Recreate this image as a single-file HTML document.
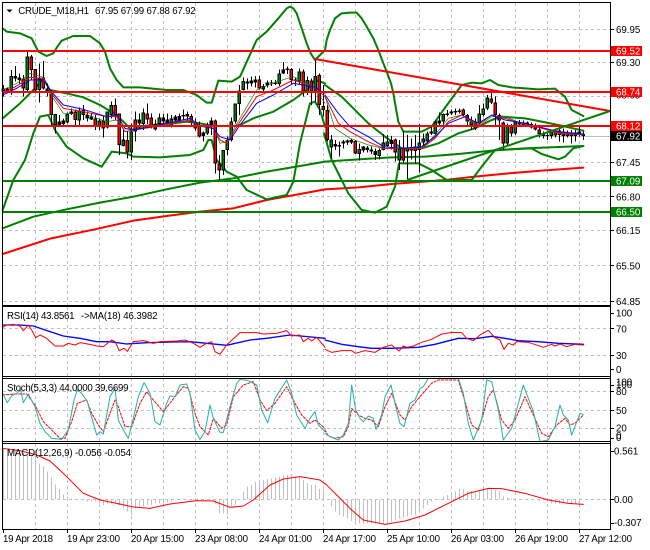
<!DOCTYPE html>
<html><head><meta charset="utf-8"><style>
html,body{margin:0;padding:0;background:#fff}
svg{display:block}
text{font-family:"Liberation Sans",sans-serif;font-size:9.7px;fill:#000}
.w{fill:#fff}
polyline{stroke-linejoin:round;stroke-linecap:round}
</style></head><body>
<svg width="650" height="550" viewBox="0 0 650 550" xmlns="http://www.w3.org/2000/svg">
<rect width="650" height="550" fill="#fff"/>
<!-- grid -->
<g stroke="#c0c0c0" stroke-width="1" stroke-dasharray="3 3" fill="none" shape-rendering="crispEdges">
<path d="M35.5 3V305M67.5 3V305M99.5 3V305M131.5 3V305M163.5 3V305M195.5 3V305M227.5 3V305M259.5 3V305M291.5 3V305M323.5 3V305M355.5 3V305M387.5 3V305M419.5 3V305M451.5 3V305M483.5 3V305M515.5 3V305M547.5 3V305M579.5 3V305"/>
<path d="M35.5 307V376M67.5 307V376M99.5 307V376M131.5 307V376M163.5 307V376M195.5 307V376M227.5 307V376M259.5 307V376M291.5 307V376M323.5 307V376M355.5 307V376M387.5 307V376M419.5 307V376M451.5 307V376M483.5 307V376M515.5 307V376M547.5 307V376M579.5 307V376"/>
<path d="M35.5 378V441M67.5 378V441M99.5 378V441M131.5 378V441M163.5 378V441M195.5 378V441M227.5 378V441M259.5 378V441M291.5 378V441M323.5 378V441M355.5 378V441M387.5 378V441M419.5 378V441M451.5 378V441M483.5 378V441M515.5 378V441M547.5 378V441M579.5 378V441"/>
<path d="M35.5 444V529M67.5 444V529M99.5 444V529M131.5 444V529M163.5 444V529M195.5 444V529M227.5 444V529M259.5 444V529M291.5 444V529M323.5 444V529M355.5 444V529M387.5 444V529M419.5 444V529M451.5 444V529M483.5 444V529M515.5 444V529M547.5 444V529M579.5 444V529"/>
<path d="M3 29.5H610M3 62.5H610M3 96.5H610M3 162.5H610M3 196.5H610M3 230.5H610M3 265.5H610M3 301.5H610"/>
<path d="M3 328.5H610M3 355.5H610M3 391.5H610M3 410.5H610M3 428.5H610M3 499.5H610"/>
</g>
<path d="M3 136.5H610" stroke="#c0c0c0" stroke-width="1" shape-rendering="crispEdges"/>

<!-- left part in 3x coords -->
<g transform="scale(.33333)" fill="none">
<polyline stroke="#008000" stroke-width="6" points="8,685 100,650 200,628 300,608 400,590 500,568 600,548 700,535 800,515 900,498 975,485"/>
<polyline stroke="#ff0000" stroke-width="6" points="8,762 150,716 285,688 400,662 500,648 600,635 700,625 800,600 900,582 975,568"/>
<polyline stroke="#008000" stroke-width="6" points="8,85 20,95 60,100 95,115 105,135 115,155 140,168 160,160 172,140 185,122 220,108 270,108 300,130 315,155 330,205 350,240 370,262 420,262 500,270 550,270 590,285 620,308 635,308 655,242 695,245 720,230 745,175 770,120 800,95 835,55 860,25 870,20 880,25 890,40 905,85 920,130 932,160 945,180 960,165 975,150"/>
<polyline stroke="#008000" stroke-width="6" points="8,630 40,540 75,480 100,400 120,350 145,345 165,390 200,440 250,475 305,500 335,455 380,460 400,470 480,472 570,465 610,450 625,420 635,420 650,480 680,515 710,530 740,570 800,598 860,585 880,545 900,430 930,310 945,305 960,330 975,380"/>
<polyline stroke="#008000" stroke-width="6" points="8,355 60,310 100,270 130,235 150,270 200,280 250,292 300,315 350,345 375,370 395,390 430,378 500,370 560,365 600,370 640,378 700,378 720,375 760,355 820,335 880,300 920,270 945,240 975,250"/>
<path stroke="#000" stroke-width="3" shape-rendering="crispEdges" d="M10 255V290M22 262V280M34 210V285M46 198V245M58 220V250M70 225V290M82 150V275M94 165V240M106 207V275M118 190V308M130 183V268M142 250V290M154 270V375M166 342V400M178 345V378M190 355V378M202 338V370M214 325V345M226 328V380M238 322V380M250 315V360M262 335V365M274 340V360M286 345V390M298 355V390M310 350V412M322 335V385M334 305V355M346 295V360M358 340V465M370 390V440M382 395V475M394 370V480M406 335V425M418 340V385M430 325V390M442 310V372M454 340V385M466 358V392M478 340V380M490 342V378M502 340V380M514 345V382M526 345V370M538 340V368M550 328V358M562 335V360M574 342V375M586 355V392M598 365V412M610 395V425M622 368V405M634 352V405M646 358V520M658 465V540M670 450V525M682 410V465M694 352V425M706 310V370M718 255V345M730 232V272M742 235V268M754 230V260M766 228V262M778 228V268M790 252V278M802 242V262M814 240V258M826 240V255M838 208V258M850 186V222M862 200V222M874 204V252M886 232V258M898 205V255M910 208V290M922 230V285M934 235V315M946 178V305M958 220V345M970 255V350"/>
<path stroke="#000" stroke-width="10" shape-rendering="crispEdges" d="M10 265V275M22 265V275M34 228V272M46 228V236M58 232V240M70 235V265M82 170V270M94 170V210M106 207V272M118 235V270M130 232V265M142 265V278M154 280V345M166 342V375M178 365V375M190 362V372M202 342V367M214 335V342M226 335V360M238 332V362M250 330V345M262 345V355M274 350V358M286 355V378M298 362V378M310 362V385M322 335V383M334 315V345M346 315V345M358 340V435M370 418V438M382 420V458M394 395V458M406 358V395M418 358V370M430 338V372M442 340V358M454 352V378M466 372V388M478 352V372M490 352V365M502 358V372M514 355V375M526 350V362M538 348V362M550 345V350M562 342V350M574 348V368M586 368V385M598 375V410M610 398V408M622 375V400M634 362V375M646 362V490M658 490V512M670 450V512M682 420V450M694 365V420M706 310V365M718 272V312M730 243V270M742 245V250M754 242V250M766 238V248M778 238V265M790 258V268M802 248V256M814 247V250M826 248V252M838 220V252M850 208V220M862 205V210M874 207V240M886 238V242M898 215V245M910 215V275M922 240V278M934 242V275M946 228V275M958 225V315M970 318V330"/>
<path stroke="#ff0000" stroke-width="4" shape-rendering="crispEdges" d="M70 238V262M94 173V207M106 210V269M130 235V262M154 283V342M226 338V357M286 358V375M310 365V382M346 318V342M358 343V432M382 423V455M406 361V392M442 343V355M454 355V375M466 375V385M574 351V365M586 371V382M598 378V407M646 365V487M658 493V509M778 241V262M874 210V237M910 218V272M934 245V272M958 228V312M970 321V327"/>
<path stroke="#008000" stroke-width="4" shape-rendering="crispEdges" d="M34 231V269M82 173V267M118 238V267M166 345V372M202 345V364M238 335V359M298 365V375M322 338V380M334 318V342M370 421V435M394 398V455M430 341V369M478 355V369M514 358V372M622 378V397M670 453V509M682 423V447M694 368V417M706 313V362M718 275V309M730 246V267M838 223V249M898 218V242M922 243V275M946 231V272"/>
<polyline stroke="#008000" stroke-width="2" points="8,270 50,250 90,220 130,232 150,280 190,340 250,340 320,365 350,360 375,395 500,375 570,365 600,378 640,380 660,430 680,425 720,355 770,270 830,245 880,230 940,260 975,310"/>
<polyline stroke="#ff0000" stroke-width="3" points="8,280 50,258 90,232 130,235 150,275 190,325 250,335 320,350 350,350 375,395 500,372 570,360 600,378 640,385 660,420 680,430 720,365 770,290 820,270 880,240 940,260 975,290"/>
<polyline stroke="#0000ff" stroke-width="3" points="8,285 50,265 90,240 130,240 150,270 190,315 250,328 320,350 350,345 375,385 400,390 500,370 570,355 600,378 640,385 660,410 690,420 720,375 770,310 820,285 880,250 940,260 975,280"/>
<g transform="translate(0,870)">
<polyline stroke="#0000ff" stroke-width="4" points="8,105 60,105 100,108 150,125 190,138 240,145 290,155 330,155 380,162 440,158 520,156 570,155 620,160 680,166 750,150 800,145 870,135 975,145"/>
<polyline stroke="#ff0000" stroke-width="3" points="8,112 20,105 40,103 60,108 70,122 85,105 95,120 107,143 120,135 140,145 165,168 190,168 205,160 225,165 240,158 270,163 290,168 310,170 335,150 345,155 358,182 372,175 382,184 400,155 430,152 460,160 480,155 530,153 555,150 580,160 600,172 620,160 635,155 645,185 660,193 680,165 720,128 770,128 790,132 830,130 860,122 875,138 900,135 910,155 925,145 935,153 950,142 975,172"/>
<polyline stroke="#ff0000" stroke-width="3" stroke-dasharray="7 5" points="8,315 40,312 80,312 105,345 130,395 160,425 180,445 195,445 215,395 232,340 260,330 275,370 295,405 310,425 330,370 345,330 355,350 375,410 395,410 420,340 440,305 460,330 490,365 525,320 550,290 565,295 585,370 600,410 625,435 640,385 665,415 680,405 700,320 730,285 760,275 780,330 800,362 825,340 860,290 885,340 905,375 930,400 945,390 975,415"/>
<polyline stroke="#20b2aa" stroke-width="3" points="8,310 22,338 35,318 50,310 62,300 70,338 85,312 105,350 120,400 135,425 155,445 185,448 205,420 222,330 232,300 245,310 262,335 280,400 290,435 300,425 310,432 330,320 345,295 355,390 370,420 385,445 400,385 415,320 432,278 450,310 465,395 480,405 500,340 510,318 525,320 540,285 560,282 570,310 585,420 600,448 615,425 630,345 640,385 660,427 670,427 690,350 710,280 720,268 745,272 770,285 785,360 803,398 825,325 860,270 875,310 890,375 915,415 930,385 945,365 955,405 975,425"/>
</g>
<g transform="translate(0,1305)">
<path stroke="#c0c0c0" stroke-width="3" shape-rendering="crispEdges" d="M10 193V40M22 193V45M34 193V47M46 193V47M58 193V48M70 193V50M82 193V55M94 193V65M106 193V75M118 193V85M130 193V95M142 193V110M154 193V128M166 193V148M178 193V162M190 193V178M202 193V185M214 193V190M262 193V200M274 193V200M286 193V200M298 193V205M310 193V210M322 193V205M334 193V205M346 193V205M358 193V210M370 193V220M382 193V230M394 193V240M406 193V220M418 193V215M430 193V213M442 193V210M454 193V210M466 193V205M478 193V205M490 193V205M502 193V203M514 193V200M580 193V190M592 193V190M604 193V190M616 193V190M640 193V200M646 193V205M658 193V235M670 193V235M682 193V238M694 193V215M706 193V210M718 193V195M730 193V170M742 193V155M754 193V150M766 193V140M778 193V140M790 193V135M802 193V132M814 193V130M826 193V128M838 193V125M850 193V122M862 193V120M874 193V122M886 193V125M898 193V125M910 193V135M922 193V145M934 193V150M946 193V150M958 193V162M970 193V165"/>
<polyline stroke="#ff0000" stroke-width="3" points="8,40 60,47 110,60 150,78 190,115 250,175 300,195 350,205 400,216 450,220 510,207 590,197 640,198 690,217 730,213 760,195 810,150 850,132 900,125 960,135 975,147"/>
</g>
</g>

<!-- right part in 3x coords -->
<g transform="translate(325,0) scale(.33333)" fill="none">
<polyline stroke="#008000" stroke-width="6" points="0,485 100,478 200,472 300,470 400,462 500,452 600,445 775,438"/>
<polyline stroke="#ff0000" stroke-width="6" points="0,568 100,562 200,552 360,540 450,530 550,520 650,512 775,503"/>
<polyline stroke="#008000" stroke-width="6" points="0,150 5,120 15,90 30,55 50,40 75,38 95,38 110,55 125,80 145,115 160,150 175,190 185,215 198,250 205,280 212,320 220,365 235,395 290,395 320,380 355,330 410,255 440,248 470,250 495,240 520,255 560,262 640,268 690,266 720,290 740,330 775,348"/>
<polyline stroke="#008000" stroke-width="6" points="-3,400 20,480 70,580 110,630 150,638 185,620 210,560 222,490 280,490 320,510 365,540 440,540 470,500 510,450 620,445 650,462 700,478 720,470 745,445 775,438"/>
<polyline stroke="#008000" stroke-width="6" points="0,255 50,290 130,370 180,410 230,445 290,445 340,430 400,400 450,385 500,360 530,350 600,355 650,365 700,375 775,392"/>
<path stroke="#000" stroke-width="3" shape-rendering="crispEdges" d="M7 315V425M19 405V475M31 420V450M43 425V470M55 420V445M67 418V435M79 415V432M91 420V462M103 430V482M115 438V458M127 438V458M139 440V462M151 445V480M163 445V478M175 402V452M187 405V440M199 408V448M211 415V485M223 420V510M235 395V490M247 405V545M259 415V478M271 405V490M283 372V518M295 400V440M307 395V430M319 380V405M331 362V405M343 338V375M355 340V375M367 330V350M379 328V345M391 325V345M403 325V340M415 325V348M427 342V375M439 350V390M451 355V390M463 315V378M475 310V350M487 285V330M499 272V312M511 290V378M523 340V420M535 365V448M547 370V440M559 372V410M571 362V405M583 360V378M595 362V380M607 365V380M619 368V385M631 370V392M643 380V412M655 395V415M667 400V420M679 392V415M691 385V412M703 380V425M715 385V428M727 392V412M739 390V430M751 390V425M763 375V410M775 395V420"/>
<path stroke="#000" stroke-width="10" shape-rendering="crispEdges" d="M7 330V420M19 418V442M31 432V440M43 435V440M55 425V430M67 422V428M79 420V428M91 423V460M103 447V462M115 440V452M127 442V450M139 448V455M151 453V465M163 450V468M175 428V450M187 424V438M199 420V432M211 418V458M223 445V482M235 443V482M247 442V455M259 442V452M271 440V453M283 428V450M295 415V428M307 400V425M319 395V400M331 365V402M343 362V370M355 342V365M367 340V345M379 335V340M391 333V337M403 332V336M415 328V345M427 345V365M439 365V375M451 365V385M463 340V370M475 325V345M487 293V325M499 295V308M511 308V345M523 345V362M535 367V430M547 375V430M559 380V400M571 365V400M583 367V373M595 368V375M607 368V375M619 372V382M631 375V388M643 388V402M655 402V408M667 405V408M679 395V408M691 392V406M703 392V405M715 395V408M727 398V408M739 398V408M751 398V408M763 395V405M775 402V408"/>
<path stroke="#ff0000" stroke-width="4" shape-rendering="crispEdges" d="M7 333V417M91 426V457M211 421V455M235 446V479M259 445V449M271 443V450M415 331V342M427 348V362M499 298V305M511 311V342M523 348V359M535 370V427M559 383V397M619 375V379M631 378V385M643 391V399M691 395V403M703 395V402M715 398V405M727 401V405M739 401V405"/>
<path stroke="#008000" stroke-width="4" shape-rendering="crispEdges" d="M19 421V439M103 450V459M163 453V465M175 431V447M187 427V435M223 448V479M247 445V452M283 431V447M295 418V425M307 403V422M331 368V399M355 345V362M439 368V372M451 368V382M463 343V367M475 328V342M487 296V322M547 378V427M571 368V397M679 398V405"/>
<polyline stroke="#008000" stroke-width="2" points="0,290 30,385 75,415 130,435 175,445 290,445 330,405 370,355 410,345 460,380 500,350 540,350 590,370 640,382 700,400 775,405"/>
<polyline stroke="#ff0000" stroke-width="3" points="0,290 40,370 75,395 130,425 175,445 230,445 290,445 330,415 370,365 410,345 460,375 500,345 540,355 590,370 640,382 700,398 775,404"/>
<polyline stroke="#0000ff" stroke-width="3" points="0,285 40,340 75,380 130,410 175,440 230,445 290,440 330,410 370,370 420,350 460,370 500,345 540,360 590,368 640,380 700,395 775,402"/>
<g transform="translate(0,870)">
<polyline stroke="#0000ff" stroke-width="4" points="0,150 50,163 100,170 140,175 200,175 280,172 330,163 400,145 450,146 500,139 540,145 580,152 640,155 700,160 775,163"/>
<polyline stroke="#ff0000" stroke-width="3" points="0,178 20,187 50,182 80,182 92,190 120,182 150,187 175,172 200,165 222,183 235,168 245,172 265,168 290,157 320,148 350,132 380,127 410,128 425,145 445,152 465,135 490,121 510,143 525,150 537,178 550,160 565,165 575,155 610,157 655,172 680,163 690,168 705,162 725,170 750,163 775,165"/>
<polyline stroke="#ff0000" stroke-width="3" stroke-dasharray="7 5" points="0,420 10,438 30,445 55,440 70,410 80,355 100,375 120,385 140,390 160,410 180,350 200,310 225,375 240,390 260,350 285,320 320,280 340,270 400,270 420,335 440,405 460,420 490,320 505,300 530,390 550,415 570,390 600,320 625,375 650,430 670,440 695,405 720,385 735,405 750,400 775,375"/>
<polyline stroke="#20b2aa" stroke-width="3" points="0,430 15,440 40,450 55,435 70,400 80,285 92,360 105,385 115,395 130,378 145,385 153,418 170,375 180,320 198,285 210,340 225,400 237,410 255,340 270,330 285,295 295,290 310,265 400,265 415,310 430,400 445,450 470,390 485,270 500,275 520,360 535,450 560,415 595,285 625,365 645,455 670,450 690,410 705,345 715,375 730,390 740,435 765,370 775,373"/>
</g>
<g transform="translate(0,1305)">
<path stroke="#c0c0c0" stroke-width="3" shape-rendering="crispEdges" d="M19 193V215M31 193V230M43 193V240M55 193V245M67 193V250M79 193V258M91 193V270M103 193V265M115 193V265M127 193V265M139 193V265M151 193V265M163 193V265M175 193V265M187 193V265M199 193V260M211 193V255M223 193V250M235 193V248M247 193V245M259 193V240M271 193V240M283 193V225M295 193V220M307 193V210M319 193V200M331 193V195M343 193V190M355 193V185M367 193V180M379 193V175M391 193V170M403 193V162M415 193V162M427 193V168M439 193V168M451 193V175M463 193V165M475 193V165M487 193V160M499 193V160M511 193V165M523 193V170M535 193V185M547 193V188M559 193V190M643 193V198M655 193V197M667 193V200M679 193V205M691 193V205M703 193V205M715 193V205M727 193V205M739 193V205M751 193V205M763 193V205"/>
<polyline stroke="#ff0000" stroke-width="3" points="0,145 40,185 80,225 115,255 180,268 240,258 300,240 380,200 430,175 490,160 530,161 600,175 670,195 730,205 775,208"/>
</g>
</g>

<!-- levels -->
<g fill="none" stroke-width="2">
<path stroke="#ff0000" d="M3 51H610M3 92H610M3 126H610M315 59L610 111"/>
<path stroke="#008000" d="M3 181H610M3 212H610M407 180L610 111"/>
</g>

<!-- borders -->
<g fill="#000" shape-rendering="crispEdges">
<rect x="2" y="2" width="609" height="1"/>
<rect x="2" y="2" width="1" height="527"/>
<rect x="610" y="2" width="1" height="527"/>
<rect x="2" y="305" width="609" height="2"/>
<rect x="2" y="376" width="609" height="1"/>
<rect x="2" y="378" width="609" height="1"/>
<rect x="2" y="441" width="609" height="1"/>
<rect x="2" y="443" width="609" height="1"/>
<rect x="2" y="529" width="609" height="1"/>
</g>
<!-- axis ticks -->
<path stroke="#000" stroke-width="1" fill="none" shape-rendering="crispEdges" d="M611 29.500H614M611 62.500H614M611 96.500H614M611 162.500H614M611 196.500H614M611 230.500H614M611 265.500H614M611 301.500H614M611 313.500H614M611 328.500H614M611 355.500H614M611 369.500H614M611 385.500H614M611 391.500H614M611 410.500H614M611 428.500H614M611 438.500H614M611 451.500H614M611 499.500H614M611 523.500H614M3.500 529V533M67.500 529V533M131.500 529V533M195.500 529V533M259.500 529V533M323.500 529V533M387.500 529V533M451.500 529V533M515.500 529V533M579.500 529V533"/>

<!-- title -->
<path d="M6.500 9.500H12.500L9.500 12.500Z" fill="#000"/>
<text x="18.300" y="14.200" textLength="70.700" lengthAdjust="spacing">CRUDE_M18,H1</text>
<text x="95" y="14.200" textLength="100.700" lengthAdjust="spacing">67.95 67.99 67.88 67.92</text>
<text x="7" y="319" textLength="67.500" lengthAdjust="spacing">RSI(14) 43.8561</text>
<text x="81" y="319" textLength="76.500" lengthAdjust="spacing">-&gt;MA(18) 46.3982</text>
<text x="7" y="391.200" textLength="121.500" lengthAdjust="spacing">Stoch(5,3,3) 44.0000 39.6699</text>
<text x="7" y="456.200" textLength="124" lengthAdjust="spacing">MACD(12,26,9) -0.056 -0.054</text>

<!-- right labels -->
<g>
<text x="616" y="32.800">69.95</text>
<text x="616" y="66">69.30</text>
<text x="616" y="98.500">68.65</text>
<text x="616" y="166">67.45</text>
<text x="616" y="200.300">66.80</text>
<text x="616" y="234">66.15</text>
<text x="616" y="269.300">65.50</text>
<text x="616" y="305">64.85</text>
<text x="616" y="316.500">100</text>
<text x="616" y="332.500">70</text>
<text x="616" y="358.800">30</text>
<text x="616" y="373">0</text>
<text x="616" y="385.500">100</text>
<text x="616" y="388">100</text>
<text x="616" y="395">80</text>
<text x="616" y="414">50</text>
<text x="616" y="431.500">20</text>
<text x="616" y="439">0</text>
<text x="616" y="441">0</text>
<text x="614" y="454.500">0.561</text>
<text x="614" y="503">0.00</text>
<text x="614" y="526">-0.307</text>
</g>
<g shape-rendering="crispEdges">
<rect x="611" y="46" width="31" height="10" fill="#ff0000"/>
<rect x="611" y="87" width="31" height="10" fill="#ff0000"/>
<rect x="611" y="121" width="31" height="10" fill="#ff0000"/>
<rect x="611" y="131" width="31" height="10" fill="#000"/>
<rect x="611" y="176" width="31" height="10" fill="#008000"/>
<rect x="611" y="207" width="31" height="10" fill="#008000"/>
</g>
<text class="w" x="616" y="54.700">69.52</text>
<text class="w" x="616" y="95.700">68.74</text>
<text class="w" x="616" y="129.700">68.12</text>
<text class="w" x="616" y="139.700">67.92</text>
<text class="w" x="616" y="184.700">67.09</text>
<text class="w" x="616" y="215.700">66.50</text>

<!-- x labels -->
<text x="3" y="542" textLength="50" lengthAdjust="spacing">19 Apr 2018</text>
<text x="67" y="542" textLength="53" lengthAdjust="spacing">19 Apr 23:00</text>
<text x="131" y="542" textLength="53" lengthAdjust="spacing">20 Apr 15:00</text>
<text x="195" y="542" textLength="53" lengthAdjust="spacing">23 Apr 08:00</text>
<text x="259" y="542" textLength="53" lengthAdjust="spacing">24 Apr 01:00</text>
<text x="323" y="542" textLength="53" lengthAdjust="spacing">24 Apr 17:00</text>
<text x="387" y="542" textLength="53" lengthAdjust="spacing">25 Apr 10:00</text>
<text x="451" y="542" textLength="53" lengthAdjust="spacing">26 Apr 03:00</text>
<text x="515" y="542" textLength="53" lengthAdjust="spacing">26 Apr 19:00</text>
<text x="579" y="542" textLength="53" lengthAdjust="spacing">27 Apr 12:00</text>
</svg>
</body></html>
